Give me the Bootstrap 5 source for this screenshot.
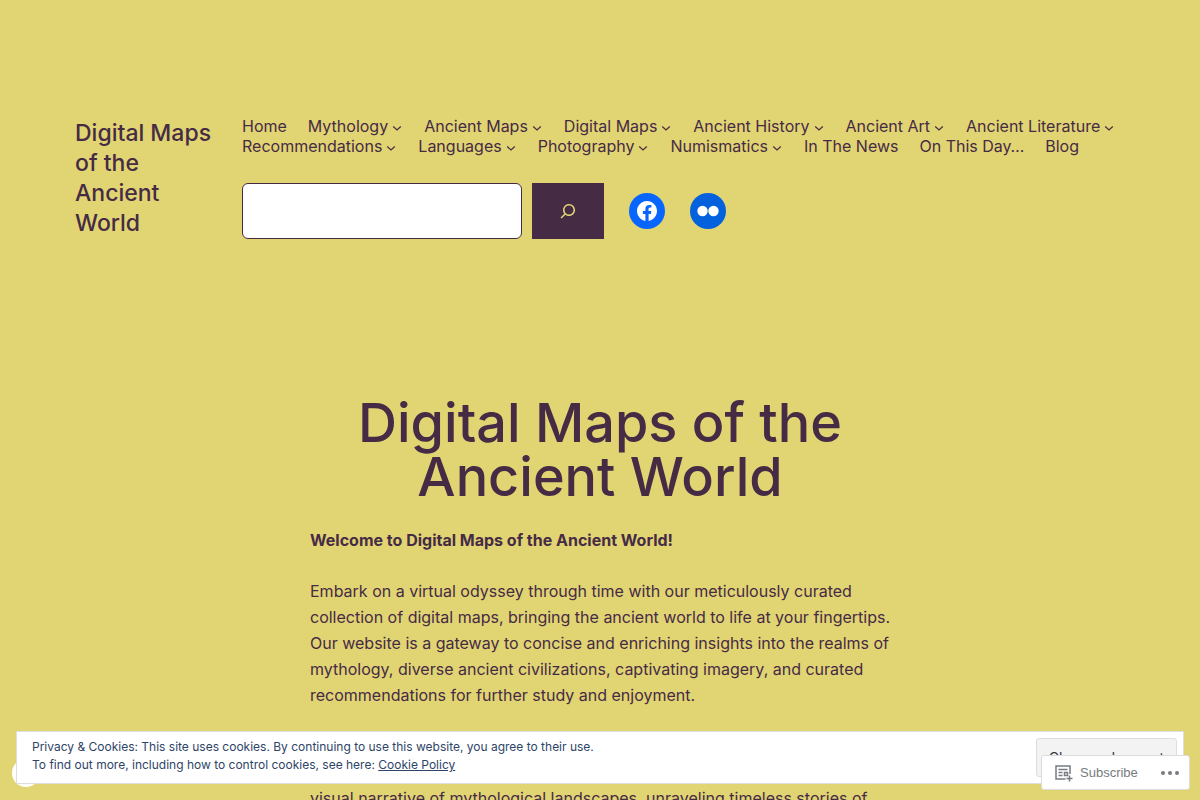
<!DOCTYPE html>
<html lang="en">
<head>
<meta charset="utf-8">
<meta name="viewport" content="width=device-width, initial-scale=1">
<title>Digital Maps of the Ancient World</title>
<link href="https://cdn.jsdelivr.net/npm/bootstrap@5.3.0/dist/css/bootstrap.min.css" rel="stylesheet">
<style>
  :root { --ink: #462b45; --sand: #e1d473; }
  body { background: var(--sand); color: var(--ink); font: 400 16px/26px Inter, "Liberation Sans", sans-serif; }
  a { color: inherit; text-decoration: none; }
  .site-header { padding: 116px 75px 0; gap: 30px; }
  .site-title { flex: 0 0 137px; margin-top: 2px; font-size: 23px; line-height: 30px; font-weight: 500; }
  .menu-list { column-gap: 21px; line-height: 20px; }
  .chevron { width: 12px; height: 12px; margin-left: 3px; margin-top: 4px; }
  .tools { margin-top: 27px; gap: 25px; }
  .search-form { gap: 10px; }
  .search-box { width: 280px; height: 56px; border: 1px solid var(--ink); border-radius: 6px; background: #fff; }
  .search-btn { width: 72px; height: 56px; border-radius: 0; background: var(--ink); color: var(--sand); }
  .search-btn:hover { background: #5a3a58; color: var(--sand); }
  .social { width: 36px; height: 36px; color: #fff; }
  .social-fb { background: #0866ff; }
  .social-flickr { background: #0461dd; }
  .site-main { max-width: 580px; padding-top: 157px; }
  .page-title { font-size: 54px; line-height: 54px; font-weight: 500; margin-bottom: 23px; }
  .intro p { margin-bottom: 25px; }
  .intro .continued { padding-top: 52px; }
  .cookie-bar { margin: 0 16px 16px; padding: 6px; padding-left: 15px; border: 1px solid #dedede; background: #fff; color: #2e4467; font-size: 12px; line-height: 18px; }
  .cookie-bar a { text-decoration: underline; }
  .accept-btn { width: 141px; height: 39px; border: 1px solid #dedede; border-radius: 3px; background: #f3f3f3; color: #333; font-size: 14px; padding: 0; }
  .follow-bar { right: 10px; bottom: 10px; width: 149px; height: 35px; z-index: 1040; border: 1px solid #dcdcde; border-radius: 3px; background: #fff; color: #777b80; font: 13px/20px "Liberation Sans", Arial, sans-serif; padding: 0 9px 0 12px; }
  .follow-bar button { border: 0; background: none; color: inherit; padding: 0; gap: 6px; }
  .corner-dot { left: 12px; bottom: 13px; width: 28px; height: 28px; background: #fff; }
</style>
</head>
<body>
<svg class="d-none" aria-hidden="true">
  <symbol id="chev" viewBox="0 0 12 12"><path d="M2.200 4.500 6 8l3.800-3.500" fill="none" stroke="currentColor" stroke-width="1.200"/></symbol>
</svg>

<header class="site-header d-flex align-items-start">
  <a class="site-title" href="#">Digital Maps of the Ancient World</a>
  <div class="flex-grow-1">
    <nav aria-label="Main">
      <ul class="menu-list list-unstyled d-flex flex-wrap mb-0">
        <li><a href="#">Home</a></li>
        <li><a class="d-flex align-items-center" href="#">Mythology<svg class="chevron"><use href="#chev"/></svg></a></li>
        <li><a class="d-flex align-items-center" href="#">Ancient Maps<svg class="chevron"><use href="#chev"/></svg></a></li>
        <li><a class="d-flex align-items-center" href="#">Digital Maps<svg class="chevron"><use href="#chev"/></svg></a></li>
        <li><a class="d-flex align-items-center" href="#">Ancient History<svg class="chevron"><use href="#chev"/></svg></a></li>
        <li><a class="d-flex align-items-center" href="#">Ancient Art<svg class="chevron"><use href="#chev"/></svg></a></li>
        <li><a class="d-flex align-items-center" href="#">Ancient Literature<svg class="chevron"><use href="#chev"/></svg></a></li>
        <li><a class="d-flex align-items-center" href="#">Recommendations<svg class="chevron"><use href="#chev"/></svg></a></li>
        <li><a class="d-flex align-items-center" href="#">Languages<svg class="chevron"><use href="#chev"/></svg></a></li>
        <li><a class="d-flex align-items-center" href="#">Photography<svg class="chevron"><use href="#chev"/></svg></a></li>
        <li><a class="d-flex align-items-center" href="#">Numismatics<svg class="chevron"><use href="#chev"/></svg></a></li>
        <li><a href="#">In The News</a></li>
        <li><a href="#">On This Day…</a></li>
        <li><a href="#">Blog</a></li>
      </ul>
    </nav>
    <div class="tools d-flex flex-wrap align-items-center">
      <form class="search-form d-flex" role="search">
        <input class="search-box px-2" type="search" aria-label="Search">
        <button class="search-btn btn border-0 p-0 d-flex align-items-center justify-content-center" type="button" aria-label="Search">
          <svg width="24" height="24" viewBox="0 0 24 24" fill="currentColor"><path d="M13 5c-3.300 0-6 2.700-6 6 0 1.400.5 2.700 1.300 3.700l-3.800 3.800 1.100 1.100 3.800-3.800c1 .8 2.300 1.300 3.700 1.300 3.300 0 6-2.700 6-6S16.300 5 13 5zm0 10.500c-2.500 0-4.500-2-4.500-4.500s2-4.500 4.500-4.500 4.500 2 4.500 4.500-2 4.500-4.500 4.500z"/></svg>
        </button>
      </form>
      <a class="social social-fb rounded-circle d-flex align-items-center justify-content-center" href="#" aria-label="Facebook">
        <svg width="24" height="24" viewBox="0 0 24 24" fill="currentColor"><path d="M12 2C6.500 2 2 6.500 2 12c0 5 3.700 9.100 8.400 9.900v-7H7.900V12h2.500V9.800c0-2.500 1.500-3.900 3.800-3.900 1.100 0 2.200.2 2.200.2v2.500h-1.300c-1.200 0-1.600.8-1.600 1.600V12h2.800l-.4 2.900h-2.300v7C18.300 21.100 22 17 22 12c0-5.500-4.500-10-10-10z"/></svg>
      </a>
      <a class="social social-flickr rounded-circle d-flex align-items-center justify-content-center" href="#" aria-label="Flickr">
        <svg width="24" height="24" viewBox="0 0 24 24" fill="currentColor"><circle cx="6.500" cy="12" r="5.200"/><circle cx="17.500" cy="12" r="5.200"/></svg>
      </a>
    </div>
  </div>
</header>

<main class="site-main mx-auto">
  <h1 class="page-title text-center">Digital Maps of the Ancient World</h1>
  <div class="intro">
    <p><strong>Welcome to Digital Maps of the Ancient World!</strong></p>
    <p>Embark on a virtual odyssey through time with our meticulously curated collection of digital maps, bringing the ancient world to life at your fingertips. Our website is a gateway to concise and enriching insights into the realms of mythology, diverse ancient civilizations, captivating imagery, and curated recommendations for further study and enjoyment.</p>
    <p class="continued">visual narrative of mythological landscapes, unraveling timeless stories of</p>
  </div>
</main>

<div class="corner-dot position-fixed rounded-circle"></div>
<div class="cookie-bar fixed-bottom d-flex justify-content-between align-items-start">
  <div>Privacy &amp; Cookies: This site uses cookies. By continuing to use this website, you agree to their use.<br>To find out more, including how to control cookies, see here: <a href="#">Cookie Policy</a></div>
  <button class="accept-btn" type="button">Close and accept</button>
</div>
<div class="follow-bar position-fixed d-flex align-items-center justify-content-between">
  <button class="d-flex align-items-center" type="button">
    <svg width="20" height="20" viewBox="0 0 20 20" fill="none" stroke="currentColor" stroke-width="1.500"><path d="M11.500 16H2V3h14v8M4.500 6.500h9M4.500 9.500h4M4.500 12.500h4M10.500 9.500h3v3h-3zM15.500 12.500v6M12.500 15.500h6"/></svg>
    Subscribe
  </button>
  <button class="d-flex" type="button" aria-label="More">
    <svg width="20" height="8" viewBox="0 0 20 8" fill="currentColor"><circle cx="3" cy="4" r="2"/><circle cx="10" cy="4" r="2"/><circle cx="17" cy="4" r="2"/></svg>
  </button>
</div>
<script src="https://cdn.jsdelivr.net/npm/bootstrap@5.3.0/dist/js/bootstrap.bundle.min.js"></script>
</body>
</html>
